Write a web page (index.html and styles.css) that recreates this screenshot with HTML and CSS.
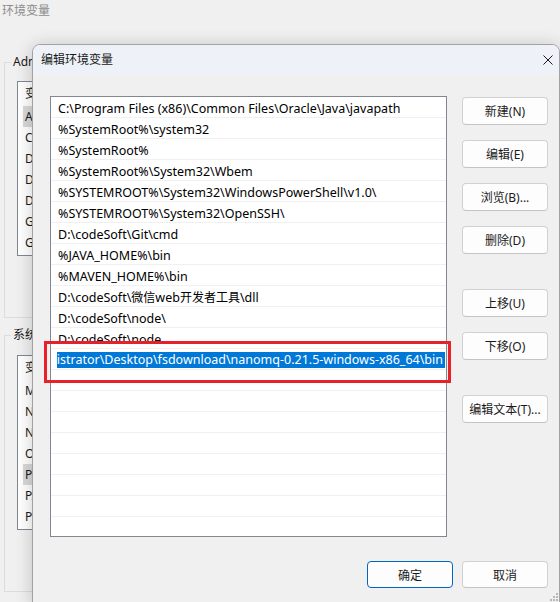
FILE: index.html
```html
<!DOCTYPE html>
<html lang="zh-CN">
<head>
<meta charset="utf-8">
<title>编辑环境变量</title>
<link rel="stylesheet" href="styles.css">
</head>
<body>
<div class="desktop">
  <section class="bgwin">
    <div class="bg-title">环境变量</div>
    <fieldset class="group">
      <legend>Administrator 的用户变量(U)</legend>
      <div class="lv">
        <div class="lv-head">变量</div>
        <div class="lv-row sel">ANDROID_HOME</div>
        <div class="lv-row">CLASSPATH</div>
        <div class="lv-row">DataGrip</div>
        <div class="lv-row">DataSpell</div>
        <div class="lv-row">DEVECO_SDK_HOME</div>
        <div class="lv-row">GoLand</div>
        <div class="lv-row">GRADLE_HOME</div>
      </div>
    </fieldset>
    <fieldset class="group group-sys">
      <legend>系统变量(S)</legend>
      <div class="lv">
        <div class="lv-head">变量</div>
        <div class="lv-row">MAVEN_HOME</div>
        <div class="lv-row">NUMBER_OF_PROCESSORS</div>
        <div class="lv-row">NVM_HOME</div>
        <div class="lv-row">OS</div>
        <div class="lv-row sel">Path</div>
        <div class="lv-row">PATHEXT</div>
        <div class="lv-row">PROCESSOR_ARCHITECTURE</div>
      </div>
    </fieldset>
  </section>

  <section class="dialog">
    <header class="dlg-title">
      <span>编辑环境变量</span>
      <svg class="close" width="10" height="10" viewBox="0 0 10 10" aria-hidden="true">
        <path d="M0.5 0.5 L9.5 9.5 M9.5 0.5 L0.5 9.5" stroke="#1a1a1a" stroke-width="1" fill="none"/>
      </svg>
    </header>
    <div class="dlg-body">
      <div class="pathlist">
        <div class="row">C:\Program Files (x86)\Common Files\Oracle\Java\javapath</div>
        <div class="row">%SystemRoot%\system32</div>
        <div class="row">%SystemRoot%</div>
        <div class="row">%SystemRoot%\System32\Wbem</div>
        <div class="row">%SYSTEMROOT%\System32\WindowsPowerShell\v1.0\</div>
        <div class="row">%SYSTEMROOT%\System32\OpenSSH\</div>
        <div class="row">D:\codeSoft\Git\cmd</div>
        <div class="row">%JAVA_HOME%\bin</div>
        <div class="row">%MAVEN_HOME%\bin</div>
        <div class="row">D:\codeSoft\<span class="cjk">微信</span>web<span class="cjk">开发者工具</span>\dll</div>
        <div class="row">D:\codeSoft\node\</div>
        <div class="row">D:\codeSoft\node</div>
        <div class="row editing">
          <div class="edit-clip"><span class="seltext">C:\Users\Administrator\Desktop\fsdownload\nanomq-0.21.5-windows-x86_64\bin</span></div>
        </div>
        <div class="row"></div>
        <div class="row"></div>
        <div class="row"></div>
        <div class="row"></div>
        <div class="row"></div>
        <div class="row"></div>
        <div class="row"></div>
        <div class="row"></div>
      </div>
      <div class="side">
        <button class="btn">新建(N)</button>
        <button class="btn">编辑(E)</button>
        <button class="btn">浏览(B)...</button>
        <button class="btn">删除(D)</button>
        <button class="btn btn-gap">上移(U)</button>
        <button class="btn">下移(O)</button>
        <button class="btn btn-gap">编辑文本(T)...</button>
      </div>
    </div>
    <footer class="dlg-foot">
      <button class="btn btn-primary">确定</button>
      <button class="btn">取消</button>
    </footer>
    <svg class="grip" width="8" height="8" viewBox="0 0 8 8" aria-hidden="true">
      <rect x="6" y="0" width="2" height="2" fill="#b8b8b8"/>
      <rect x="3" y="3" width="2" height="2" fill="#b8b8b8"/>
      <rect x="6" y="3" width="2" height="2" fill="#b8b8b8"/>
      <rect x="0" y="6" width="2" height="2" fill="#b8b8b8"/>
      <rect x="3" y="6" width="2" height="2" fill="#b8b8b8"/>
      <rect x="6" y="6" width="2" height="2" fill="#b8b8b8"/>
    </svg>
    <div class="redbox"></div>
  </section>
</div>
</body>
</html>
```

FILE: styles.css
```css
* { box-sizing: border-box; }

html, body {
  margin: 0;
  padding: 0;
  width: 560px;
  height: 602px;
  overflow: hidden;
  background: #f0f0f0;
  font-family: "Noto Sans", "Noto Sans CJK SC", sans-serif;
  font-size: 12px;
  color: #1a1a1a;
}

.desktop {
  position: relative;
  width: 560px;
  height: 602px;
  overflow: hidden;
}

/* ---------- background window ---------- */
.bgwin {
  width: 560px;
  height: 602px;
  background: #f0f0f0;
  padding: 0 0 0 4px;
  display: flex;
  flex-direction: column;
}

.bg-title {
  height: 20px;
  line-height: 20px;
  margin-left: -2px;
  color: #8c8c8c;
  font-family: "Noto Sans CJK SC", sans-serif;
}

.group {
  margin: 34px 0 0 0;
  width: 520px;
  border: 1px solid #dcdcdc;
  padding: 11px 12px 61px 12px;
  min-width: 0;
}

.group-sys {
  margin-top: 9px;
  padding-top: 12px;
}

.group legend {
  margin-left: -6px;
  padding: 0 2px;
  line-height: 16px;
  color: #1a1a1a;
}

.lv {
  height: 175px;
  border: 1px solid #828790;
  background: #ffffff;
  overflow: hidden;
}

.lv-head {
  height: 24px;
  line-height: 24px;
  padding-left: 7px;
}

.lv-row {
  height: 21px;
  line-height: 21px;
  margin-left: 5px;
  padding-left: 2px;
}

.lv-row.sel {
  background: #d9d9d9;
}

/* ---------- dialog ---------- */
.dialog {
  position: absolute;
  left: 32px;
  top: 44px;
  width: 528px;
  height: 562px;
  background: #f0f0f0;
  border: 1px solid #a2a2a2;
  border-radius: 8px 8px 0 0;
  box-shadow: 0 2px 18px rgba(0, 0, 0, 0.2);
  display: flex;
  flex-direction: column;
}

.dlg-title {
  height: 30px;
  background: #eef2f8;
  border-radius: 7px 7px 0 0;
  display: flex;
  align-items: center;
  justify-content: space-between;
  padding: 0 6px 3px 8px;
  font-family: "Noto Sans CJK SC", sans-serif;
  font-size: 12px;
  color: #1a1a1a;
}

.close {
  display: block;
  margin-top: 2px;
}

.dlg-body {
  display: flex;
  gap: 15px;
  padding: 21px 11px 0 17px;
}

.pathlist {
  width: 397px;
  height: 441px;
  border: 1px solid #828790;
  background: #ffffff;
  overflow: hidden;
  flex: none;
}

.row {
  height: 21px;
  line-height: 18px;
  padding-top: 3px;
  border-bottom: 1px solid #f0f0f0;
  padding-left: 7px;
  white-space: nowrap;
  overflow: hidden;
  color: #000000;
  font-size: 12.5px;
}

.cjk {
  font-size: 12px;
}

.row.editing {
  padding: 3px 1px 0 6px;
}

.edit-clip {
  height: 16px;
  display: flex;
  justify-content: flex-end;
  overflow: hidden;
}

.seltext {
  flex: none;
  background: #0078d7;
  color: #ffffff;
  line-height: 16px;
  height: 16px;
  padding-right: 2px;
  white-space: nowrap;
}

.side {
  display: flex;
  flex-direction: column;
  gap: 15px;
  padding-top: 1px;
  flex: none;
}

.btn {
  width: 86px;
  height: 28px;
  margin: 0;
  padding: 0;
  background: #fdfdfd;
  border: 1px solid #d1d1d1;
  border-bottom-color: #c4c4c4;
  border-radius: 4px;
  font-family: "Noto Sans", "Noto Sans CJK SC", sans-serif;
  font-size: 12px;
  color: #1a1a1a;
}

.btn-gap {
  margin-top: 20px;
}

.dlg-foot {
  display: flex;
  justify-content: flex-end;
  gap: 9px;
  padding: 24px 11px 0 0;
}

.dlg-foot .btn {
  height: 27px;
}

.btn-primary {
  border: 1px solid #0067c0;
}

.grip {
  position: absolute;
  right: 1px;
  bottom: 4px;
}

.redbox {
  position: absolute;
  left: 11px;
  top: 296px;
  width: 407px;
  height: 42px;
  border: 3px solid #e8202a;
}
```
